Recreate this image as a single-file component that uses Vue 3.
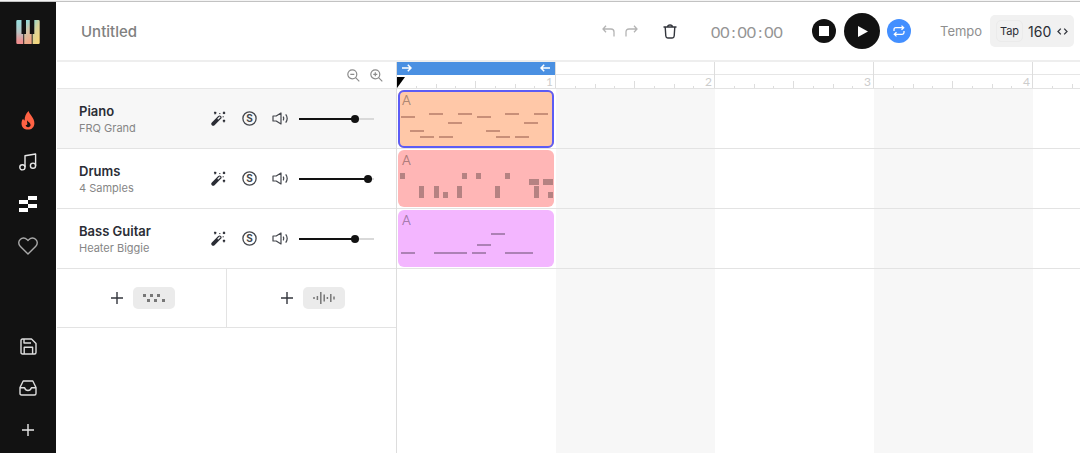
<script setup>
import { reactive, ref } from 'vue'

const title = ref('Untitled')
const tempo = ref('160')
const bars = [1, 2, 3, 4, 5]

const long = (y, xs, w = 14) => xs.map((x) => ({ x, y, w, h: 2 }))
const hits = (y, xs) => xs.map((x) => ({ x, y, w: 5, h: 6 }))

const tracks = reactive([
  {
    name: 'Piano', sound: 'FRQ Grand', volume: 78, tone: 'orange', selected: true,
    notes: [
      ...long(26, [3, 79]),
      ...long(23, [31, 60, 107, 136]),
      ...long(32, [50, 126]),
      ...long(40, [12, 88]),
      ...long(46, [22, 41, 98, 117]),
    ],
  },
  {
    name: 'Drums', sound: '4 Samples', volume: 97, tone: 'red', selected: false,
    notes: [
      ...hits(23, [2, 64, 78, 107]),
      ...hits(29, [131, 136, 145, 150]),
      ...hits(36, [21, 36, 59, 97, 136]),
      ...hits(42, [21, 36, 45, 59, 97, 136, 150]),
    ],
  },
  {
    name: 'Bass Guitar', sound: 'Heater Biggie', volume: 78, tone: 'purple', selected: false,
    notes: [
      ...long(42, [3, 74, 107, 121]),
      ...long(42, [36], 33),
      ...long(34, [79]),
      ...long(23, [93]),
    ],
  },
])
</script>

<template>
  <div class="app">
    <nav class="sidebar" aria-label="Main">
      <a class="logo" href="#" aria-label="Home">
        <svg width="24" height="24" viewBox="0 0 24 24">
          <defs>
            <linearGradient id="keyA" x1="0" y1="0" x2="0" y2="1">
              <stop offset="0.1" stop-color="#9bdcdc" /><stop offset="0.5" stop-color="#b9c4c4" /><stop offset="0.9" stop-color="#ef8f8f" />
            </linearGradient>
            <linearGradient id="keyB" x1="0" y1="0" x2="0.3" y2="1">
              <stop offset="0.1" stop-color="#8fdbdc" /><stop offset="0.5" stop-color="#cfc6a8" /><stop offset="1" stop-color="#f0a887" />
            </linearGradient>
            <linearGradient id="keyC" x1="0" y1="0" x2="0.6" y2="1">
              <stop offset="0" stop-color="#84d7d6" /><stop offset="0.5" stop-color="#d9d49a" /><stop offset="1" stop-color="#f5d77c" />
            </linearGradient>
          </defs>
          <path d="M1.5 0H5.5V14H7.3V24H1.5Q.3 24 .3 22.8V1.2Q.3 0 1.5 0Z" fill="url(#keyA)" />
          <path d="M10 0H13.8V14H15.7V24H8.2V14H10Z" fill="url(#keyB)" />
          <path d="M18.3 0H22.5Q23.7 0 23.7 1.2V22.8Q23.7 24 22.5 24H16.6V14H18.3Z" fill="url(#keyC)" />
        </svg>
      </a>
      <button class="nav" aria-label="Trending">
        <svg width="14" height="19" viewBox="0 0 14 19">
          <path d="M7.6 0C8.6 3.8 13.4 6.6 13.4 12.2C13.4 16 10.8 18.6 7 18.6C3.1 18.6.5 15.9.5 12.4C.5 10.2 1.3 8.6 2.2 7.7C2.5 8.7 2.9 9.3 3.6 9.6C3.6 5.8 4.8 2.3 7.6 0Z" fill="#ff6244" />
          <path d="M6.2 9.2C6.5 11 9.6 11.4 9.6 14C9.6 15.4 8.4 16.2 7.2 16.2C5.6 16.2 4.7 15.2 4.7 14C5.4 14.3 6.3 13.9 6.4 13C6.4 11.8 5.6 10.8 6.2 9.2Z" fill="#121212" />
        </svg>
      </button>
      <button class="nav" aria-label="Music">
        <svg width="18" height="18" viewBox="0 0 18 18" fill="none" stroke="#e8e8e8" stroke-width="1.4">
          <circle cx="3.4" cy="14.3" r="2.6" /><circle cx="14" cy="12.7" r="2.6" />
          <path d="M6 14.3V2.8L16.6 1V12.7" stroke-linejoin="round" />
        </svg>
      </button>
      <button class="nav" aria-label="Arrange">
        <svg width="18" height="16" viewBox="0 0 18 16" fill="#fff">
          <path d="M9 0H18V4H9ZM0 4H9V8H0ZM9 8H18V12H9ZM0 12H9V16H0Z" />
        </svg>
      </button>
      <button class="nav" aria-label="Favourites">
        <svg width="20" height="18" viewBox="0 0 20 18" fill="none" stroke="#aaa" stroke-width="1.4" stroke-linejoin="round">
          <path d="M10 17L2.2 9.2A4.7 4.7 0 0 1 2.2 2.4A4.7 4.7 0 0 1 8.9 2.4L10 3.6L11.1 2.4A4.7 4.7 0 0 1 17.8 2.4A4.7 4.7 0 0 1 17.8 9.2Z" />
        </svg>
      </button>
      <span class="spring"></span>
      <button class="nav" aria-label="Save">
        <svg width="17" height="17" viewBox="0 0 17 17" fill="none" stroke="#ddd" stroke-width="1.4" stroke-linejoin="round">
          <path d="M2.5 1H11.5L16 5.5V14.5Q16 16 14.5 16H2.5Q1 16 1 14.5V2.5Q1 1 2.5 1Z" />
          <path d="M4 1V5H11M4.2 16V9.3H12.6V16" />
        </svg>
      </button>
      <button class="nav" aria-label="Inbox">
        <svg width="18" height="16" viewBox="0 0 18 16" fill="none" stroke="#ddd" stroke-width="1.4" stroke-linejoin="round">
          <path d="M4.2 1H13.8L17 7.5V13.5Q17 15 15.5 15H2.5Q1 15 1 13.5V7.5Z" />
          <path d="M1 7.7H5.6C6.2 9.6 7.3 10.5 9 10.5S11.8 9.6 12.4 7.7H17" />
        </svg>
      </button>
      <button class="nav" aria-label="New">
        <svg width="12" height="12" viewBox="0 0 12 12" stroke="#e8e8e8" stroke-width="1.4"><path d="M6 0V12M0 6H12" /></svg>
      </button>
    </nav>

    <main class="main">
      <header class="toolbar">
        <input v-model="title" class="title" aria-label="Project title" />
        <button class="tool" aria-label="Undo">
          <svg width="13" height="12" viewBox="0 0 13 12" fill="none" stroke="#b4b4b4" stroke-width="1.3"><path d="M4 .8L1 4L4 7.2M1 4H9Q12 4 12 7V11.5" /></svg>
        </button>
        <button class="tool redo" aria-label="Redo">
          <svg width="13" height="12" viewBox="0 0 13 12" fill="none" stroke="#b4b4b4" stroke-width="1.3"><path d="M9 .8L12 4L9 7.2M12 4H4Q1 4 1 7V11.5" /></svg>
        </button>
        <button class="tool trash" aria-label="Delete">
          <svg width="14" height="15" viewBox="0 0 14 15" fill="none" stroke="#33363d" stroke-width="1.4"><path d="M.5 3H13.5M4.6 3Q4.6 1 7 1T9.4 3M2.2 3L2.8 12Q3 14 4.8 14H9.2Q11 14 11.2 12L11.8 3" /></svg>
        </button>
        <output class="clock"><span>00</span><span>:</span><span>00</span><span>:</span><span>00</span></output>
        <button class="round dark" aria-label="Stop"><svg width="10" height="10" viewBox="0 0 10 10"><path d="M0 0H10V10H0Z" fill="#fff" /></svg></button>
        <button class="round dark play" aria-label="Play"><svg width="10" height="11" viewBox="0 0 10 11"><path d="M0 0L10 5.5L0 11Z" fill="#fff" /></svg></button>
        <button class="round loop" aria-label="Loop">
          <svg width="12" height="12" viewBox="0 0 12 12" fill="none" stroke="#fff" stroke-width="1.3"><path d="M1 6V4.5Q1 2.7 2.8 2.7H10.5M8.5 .6L10.7 2.7L8.5 4.8M11 6V7.5Q11 9.3 9.2 9.3H1.5M3.5 7.2L1.3 9.3L3.5 11.4" /></svg>
        </button>
        <label class="tempo-label" for="tempo">Tempo</label>
        <div class="tempo">
          <button class="tap">Tap</button>
          <input id="tempo" v-model="tempo" class="bpm" />
          <svg width="11" height="7" viewBox="0 0 11 7" fill="none" stroke="#33363d" stroke-width="1.3"><path d="M3.8 .6L1 3.5L3.8 6.4M7.2 .6L10 3.5L7.2 6.4" /></svg>
        </div>
      </header>

      <div class="workspace">
        <section class="panel" aria-label="Tracks">
          <div class="zoombar">
            <button aria-label="Zoom out">
              <svg width="13" height="13" viewBox="0 0 13 13" fill="none" stroke="#8c8c8c" stroke-width="1.2"><circle cx="5.3" cy="5.3" r="4.5" /><path d="M8.6 8.6L12.3 12.3M3.3 5.3H7.3" /></svg>
            </button>
            <button aria-label="Zoom in">
              <svg width="13" height="13" viewBox="0 0 13 13" fill="none" stroke="#8c8c8c" stroke-width="1.2"><circle cx="5.3" cy="5.3" r="4.5" /><path d="M8.6 8.6L12.3 12.3M3.3 5.3H7.3M5.3 3.3V7.3" /></svg>
            </button>
          </div>
          <div v-for="t in tracks" :key="t.name" class="track" :class="{ selected: t.selected }">
            <div class="names">
              <div class="name">{{ t.name }}</div>
              <div class="sound">{{ t.sound }}</div>
            </div>
            <button class="control" aria-label="Effects">
              <svg width="15" height="15" viewBox="0 0 15 15" fill="none" stroke="#2b2d35">
                <path d="M2.2 12.8L8.6 6.4" stroke-width="3.8" stroke-linecap="round" />
                <path d="M7.2 7.8L8.7 6.3" stroke="#eee" stroke-width="1.5" stroke-linecap="round" />
                <path d="M3.2 1L5.2 3M5.2 1L3.2 3M12 .8L14 2.8M14 .8L12 2.8M12 9L14 11M14 9L12 11" stroke-width="1.1" />
                <path d="M8.2 2.6H9.4M11.6 5.8H12.8" stroke-width="1" />
              </svg>
            </button>
            <button class="control" aria-label="Solo">
              <svg width="15" height="15" viewBox="0 0 15 15"><circle cx="7.5" cy="7.5" r="6.6" fill="none" stroke="#44474d" stroke-width="1.3" /><text x="7.5" y="11" text-anchor="middle" font-size="10" font-weight="700" fill="#44474d">S</text></svg>
            </button>
            <button class="control" aria-label="Mute">
              <svg width="17" height="13" viewBox="0 0 17 13" fill="none" stroke="#44474d" stroke-width="1.2" stroke-linejoin="round"><path d="M1 4H4.2L9 1V12L4.2 9H1Z" /><path d="M11.2 4.6Q12.2 6.5 11.2 8.4M13.7 2.4Q16.7 6.5 13.7 10.6" /></svg>
            </button>
            <input v-model="t.volume" type="range" min="0" max="100" :style="{ '--level': t.volume + '%' }" :aria-label="t.name + ' volume'" />
          </div>
          <div class="add">
            <button aria-label="Add instrument track">
              <svg width="12" height="12" viewBox="0 0 12 12" stroke="#33363d" stroke-width="1.4"><path d="M6 0V12M0 6H12" /></svg>
              <span class="pill">
                <svg width="22" height="8" viewBox="0 0 22 8" fill="#777"><path d="M0 0H3V3H0ZM7 0H10V3H7ZM14 0H17V3H14ZM4 5H7V8H4ZM11 5H14V8H11ZM19 5H22V8H19Z" /></svg>
              </span>
            </button>
            <button aria-label="Add audio track">
              <svg width="12" height="12" viewBox="0 0 12 12" stroke="#33363d" stroke-width="1.4"><path d="M6 0V12M0 6H12" /></svg>
              <span class="pill">
                <svg width="22" height="12" viewBox="0 0 22 12" stroke="#777" stroke-width="1.5"><path d="M1 5V7M4.4 4V8M7.8 0V12M11.2 2.5V9.5M14.4 5V7M17.8 2V10M21 4.5V7.5" /></svg>
              </span>
            </button>
          </div>
        </section>

        <section class="timeline" aria-label="Timeline">
          <div class="ruler">
            <div v-for="n in bars" :key="n" class="bar">
              <div class="strip" :class="{ looped: n === 1 }">
                <template v-if="n === 1">
                  <svg width="10" height="8" viewBox="0 0 10 8" fill="none" stroke="#fff" stroke-width="1.5"><path d="M0 4H9M5.8 .7L9 4L5.8 7.3" /></svg>
                  <svg width="10" height="8" viewBox="0 0 10 8" fill="none" stroke="#fff" stroke-width="1.5"><path d="M10 4H1M4.2 .7L1 4L4.2 7.3" /></svg>
                </template>
              </div>
              <div class="ticks">
                <i v-for="k in 8" :key="k"></i>
                <span v-if="n < bars.length" class="number">{{ n }}</span>
              </div>
            </div>
            <svg class="playhead" width="8" height="11" viewBox="0 0 8 11"><path d="M0 0H8L0 11Z" fill="#000" /></svg>
          </div>
          <div class="lanes">
            <div v-for="t in tracks" :key="t.name" class="lane">
              <button class="clip" :class="[t.tone, { active: t.selected }]" :aria-label="t.name + ' clip'">
                <span class="letter">A</span>
                <svg width="100%" height="100%">
                  <rect v-for="(r, i) in t.notes" :key="i" :x="r.x" :y="r.y" :width="r.w" :height="r.h" />
                </svg>
              </button>
            </div>
          </div>
        </section>
      </div>
    </main>
  </div>
</template>

<style>
body { background: #fff; }
</style>

<style scoped>
.app, .app * { box-sizing: border-box; }
.app {
  display: flex;
  min-height: 100vh;
  padding-top: 2px;
  background: linear-gradient(#f4f4f4 1px, #c2c2c2 1px, #c2c2c2 2px, #fff 2px);
  font-family: Inter, "Liberation Sans", sans-serif;
  color: #2b2d35;
  overflow: hidden;
}
button, input { border: 0; padding: 0; margin: 0; background: none; font: inherit; color: inherit; }
button { display: flex; align-items: center; justify-content: center; cursor: pointer; }
svg { display: block; flex: none; }

.sidebar { display: flex; flex-direction: column; flex: none; width: 56px; padding-bottom: 2px; background: #121212; }
.logo { display: flex; justify-content: center; padding-top: 18px; height: 97px; }
.nav { height: 42px; }
.spring { flex: 1; }

.main { display: flex; flex-direction: column; flex: 1; min-width: 0; padding-left: 1px; }
.toolbar { display: flex; align-items: center; height: 60px; padding: 0 6px 0 24px; border-bottom: 2px solid #eee; }
.title { flex: 1; min-width: 0; font-size: 15px; font-weight: 500; color: #808080; }
.tool { width: 16px; height: 24px; }
.redo { margin-left: 7px; }
.trash { margin: 0 33px 0 23px; }
.clock { display: flex; gap: 2px; width: 73px; margin-right: 28px; font-family: Lato, sans-serif; font-size: 16px; color: #949494; }
.round { flex: none; width: 24px; height: 24px; border-radius: 50%; }
.dark { background: #121212; }
.play { width: 36px; height: 36px; margin: 0 7px 0 8px; padding-left: 1px; }
.loop { background: #438fff; }
.tempo-label { width: 50px; margin-left: 29px; font-size: 13px; color: #8f8f8f; }
.tempo { display: flex; align-items: center; flex: none; width: 84px; height: 32px; padding: 0 6px; border-radius: 5px; background: #f1f1f1; }
.tap { width: 27px; height: 22px; border: 1px solid #ebebeb; border-radius: 5px; font-size: 11px; }
.bpm { width: 28px; margin: 0 1px 0 5px; font-size: 14px; flex: none; }

.workspace { display: flex; flex: 1; min-width: 0; }
.panel { flex: none; width: 340px; border-right: 1px solid #ddd; }
.zoombar { display: flex; justify-content: flex-end; align-items: center; gap: 10px; height: 27px; padding-right: 13px; border-bottom: 1px solid #e6e6e6; }
.track { display: flex; align-items: center; height: 60px; padding: 0 22px; border-bottom: 1px solid #e3e3e3; }
.track.selected { background: #f7f7f7; }
.names { flex: 1; min-width: 0; padding-top: 2px; }
.name { font-size: 13px; line-height: 17px; font-weight: 600; }
.sound { font-size: 11px; line-height: 16px; color: #868686; }
.control { width: 17px; height: 24px; margin-right: 14px; }
.control + input { margin-left: -4px; }
input[type="range"] {
  appearance: none;
  width: 75px;
  height: 12px;
  background: linear-gradient(#121212, #121212) left center / var(--level) 2px no-repeat, linear-gradient(#d9d9d9, #d9d9d9) center / 100% 2px no-repeat;
}
input[type="range"]::-webkit-slider-thumb { appearance: none; width: 8px; height: 8px; border-radius: 50%; background: #121212; }
.add { display: flex; height: 59px; border-bottom: 1px solid #e3e3e3; }
.add button { flex: 1; gap: 10px; padding-left: 2px; }
.add button + button { border-left: 1px solid #e3e3e3; }
.pill { display: flex; align-items: center; justify-content: center; width: 42px; height: 22px; border-radius: 5px; background: #ebebeb; }

.timeline { display: flex; flex-direction: column; flex: 1; min-width: 0; overflow: hidden; }
.ruler { position: relative; display: flex; height: 27px; border-bottom: 1px solid #e3e3e3; }
.bar { flex: none; width: 159px; border-right: 1px solid #ddd; }
.strip { display: flex; align-items: center; justify-content: space-between; height: 13px; padding: 0 5px; border-bottom: 1px solid #e6e6e6; }
.strip.looped { background: #4a90e2; border-color: #4a90e2; }
.ticks { position: relative; display: grid; grid-template-columns: repeat(8, 1fr); align-items: end; height: 13px; }
.ticks i { height: 2px; border-right: 1px solid #ddd; }
.ticks i:nth-child(even) { height: 4px; }
.ticks i:nth-child(4) { height: 7px; }
.ticks i:nth-child(8) { border: 0; }
.number { position: absolute; right: 2px; bottom: 0; font-family: Lato, sans-serif; font-size: 12px; line-height: 12px; color: #ccc; }
.playhead { position: absolute; left: 0; top: 15px; }
.lanes { flex: 1; background: repeating-linear-gradient(90deg, #fff 0 159px, #f7f7f7 159px 318px); }
.lane { height: 60px; padding: 1px; border-bottom: 1px solid #e3e3e3; }
.clip { position: relative; display: block; width: 156px; height: 57px; border-radius: 6px; overflow: hidden; }
.clip.active { height: 58px; outline: 2px solid #5c5cf5; outline-offset: -2px; }
.letter { position: absolute; left: 4px; top: 3px; font-family: Lato, sans-serif; font-size: 13px; line-height: 14px; color: #0005; }
.orange { background: #ffc8a8; fill: #c88f78; }
.red { background: #ffb6b6; fill: #b58282; }
.purple { background: #f3b6ff; fill: #ac81b5; }
</style>
